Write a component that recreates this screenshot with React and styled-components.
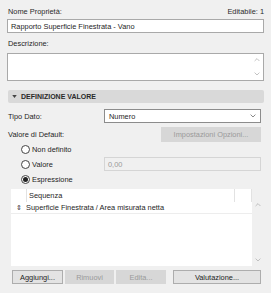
import React from "react";
import styled, { createGlobalStyle } from "styled-components";

const Global = createGlobalStyle`
  html, body { margin: 0; padding: 0; background: #f0f0f0; }
  body { font-family: "Liberation Sans", Arial, sans-serif; }
`;

const Panel = styled.div`
  width: 271px;
  height: 293px;
  box-sizing: border-box;
  padding: 6px 7px 0 7px;
  background: #f0f0f0;
  color: #1e1e1e;
  font-size: 7.4px;
  display: flex;
  flex-direction: column;
  overflow: hidden;
`;

const TopRow = styled.div`
  display: flex;
  justify-content: space-between;
  align-items: center;
  height: 11px;
  padding: 0 0 0 1px;
`;

const Label = styled.span`
  color: #2a2a2a;
`;

const TextBox = styled.div`
  box-sizing: border-box;
  height: 14px;
  margin-top: 2px;
  background: #fff;
  border: 1px solid #a9a9a9;
  display: flex;
  align-items: center;
  padding-left: 3px;
`;

const DescLabel = styled.div`
  margin-top: 5px;
  height: 11px;
  display: flex;
  align-items: center;
  padding-left: 1px;
`;

const TextArea = styled.div`
  box-sizing: border-box;
  margin-top: 4px;
  height: 28px;
  background: #fff;
  border: 1px solid #a9a9a9;
  display: flex;
  justify-content: flex-end;
`;

const ScrollArrows = styled.div`
  width: 12px;
  display: flex;
  flex-direction: column;
  justify-content: space-between;
  align-items: center;
  padding: ${(p) => p.$pad || "4px 0"};
  box-sizing: border-box;
  background: ${(p) => p.$bg || "transparent"};
`;

const Section = styled.div`
  margin-top: 9px;
  margin-left: 1px;
  height: 13px;
  background: #d9d9d9;
  border-radius: 2px;
  display: flex;
  align-items: center;
  padding-left: 4px;
  gap: 4px;
  font-weight: bold;
  font-size: 7px;
  color: #2a2a2a;
`;

const FieldRow = styled.div`
  display: flex;
  align-items: center;
  justify-content: space-between;
  margin-top: ${(p) => p.$mt || 0}px;
  height: ${(p) => p.$h || 15}px;
  padding-left: 1px;
  padding-right: 3px;
`;

const Select = styled.div`
  box-sizing: border-box;
  width: 157px;
  height: 14px;
  background: #fff;
  border: 1px solid #8c8c8c;
  display: flex;
  align-items: center;
  justify-content: space-between;
  padding: 0 4px 0 4px;
`;

const Button = styled.div`
  box-sizing: border-box;
  width: ${(p) => p.$w}px;
  height: ${(p) => p.$h || 15}px;
  margin-left: ${(p) => p.$ml || 0}px;
  display: flex;
  align-items: center;
  justify-content: center;
  background: ${(p) => (p.$disabled ? "#d7d7d7" : "#e3e3e3")};
  border: 1px solid ${(p) => (p.$disabled ? "#d7d7d7" : "#adadad")};
  color: ${(p) => (p.$disabled ? "#9a9a9a" : "#222")};
`;

const RadioRow = styled.div`
  display: flex;
  align-items: center;
  justify-content: space-between;
  height: ${(p) => p.$h || 14}px;
  padding-left: 14px;
  padding-right: 3px;
`;

const RadioLabel = styled.div`
  display: flex;
  align-items: center;
  gap: 2px;
`;

const Circle = styled.span`
  box-sizing: border-box;
  width: 9px;
  height: 9px;
  border-radius: 50%;
  border: 1px solid #444;
  background: #fff;
  display: flex;
  align-items: center;
  justify-content: center;
  &::after {
    content: "";
    width: 5px;
    height: 5px;
    border-radius: 50%;
    background: ${(p) => (p.$checked ? "#222" : "transparent")};
  }
`;

const DisabledInput = styled.div`
  box-sizing: border-box;
  width: 157px;
  height: 14px;
  border: 1px solid #d5d5d5;
  background: #f0f0f0;
  color: #9a9a9a;
  display: flex;
  align-items: center;
  padding-left: 3px;
`;

const ListBox = styled.div`
  margin-top: 3px;
  margin-left: 4px;
  height: 77px;
  display: flex;
`;

const ListBody = styled.div`
  flex: 1;
  background: #fff;
  display: flex;
  flex-direction: column;
`;

const HeaderRow = styled.div`
  display: flex;
  height: 13px;
  align-items: stretch;
`;

const HeadCell = styled.div`
  width: ${(p) => (p.$w ? `${p.$w}px` : "auto")};
  flex: ${(p) => (p.$w ? "none" : 1)};
  border-right: ${(p) => (p.$line ? "1px solid #e2e2e2" : "none")};
  display: flex;
  align-items: center;
  padding-left: ${(p) => p.$pl || 0}px;
`;

const DataRow = styled.div`
  display: flex;
  align-items: center;
  height: 11px;
  border-bottom: 1px solid #ededed;
`;

const Handle = styled.span`
  width: 15px;
  display: flex;
  justify-content: center;
  font-size: 7px;
  color: #333;
`;

const ButtonBar = styled.div`
  display: flex;
  margin-top: 4px;
  margin-left: 5px;
  gap: 2px;
`;

const Chevron = ({ up, color = "#b0b0b0", size = 6 }) => (
  <svg width={size} height={size * 0.6} viewBox="0 0 10 6">
    <path
      d={up ? "M1 5 L5 1 L9 5" : "M1 1 L5 5 L9 1"}
      fill="none"
      stroke={color}
      strokeWidth="1.3"
    />
  </svg>
);

export default function App() {
  return (
    <>
      <Global />
      <Panel>
        <TopRow>
          <Label>Nome Proprietà:</Label>
          <Label>Editabile: 1</Label>
        </TopRow>
        <TextBox>Rapporto Superficie Finestrata - Vano</TextBox>
        <DescLabel>Descrizione:</DescLabel>
        <TextArea>
          <ScrollArrows>
            <Chevron up />
            <Chevron />
          </ScrollArrows>
        </TextArea>
        <Section>
          <svg width="5" height="3" viewBox="0 0 6 4">
            <path d="M0 0 L6 0 L3 4 Z" fill="#444" />
          </svg>
          DEFINIZIONE VALORE
        </Section>
        <FieldRow $mt={6} $h={14}>
          <span>Tipo Dato:</span>
          <Select>
            <span>Numero</span>
            <Chevron color="#666" />
          </Select>
        </FieldRow>
        <FieldRow $mt={4}>
          <span>Valore di Default:</span>
          <Button $w={100} $disabled>
            Impostazioni Opzioni...
          </Button>
        </FieldRow>
        <RadioRow>
          <RadioLabel>
            <Circle />
            Non definito
          </RadioLabel>
        </RadioRow>
        <RadioRow $h={16}>
          <RadioLabel>
            <Circle />
            Valore
          </RadioLabel>
          <DisabledInput>0,00</DisabledInput>
        </RadioRow>
        <RadioRow>
          <RadioLabel>
            <Circle $checked />
            Espressione
          </RadioLabel>
        </RadioRow>
        <ListBox>
          <ListBody>
            <HeaderRow>
              <HeadCell $w={15} $line />
              <HeadCell $pl={2} $line>
                Sequenza
              </HeadCell>
              <HeadCell $w={16} $line />
            </HeaderRow>
            <DataRow>
              <Handle>⇕</Handle>
              <span>Superficie Finestrata / Area misurata netta</span>
            </DataRow>
          </ListBody>
          <ScrollArrows $pad="14px 0 4px" $bg="#f0f0f0">
            <Chevron up />
            <Chevron />
          </ScrollArrows>
        </ListBox>
        <ButtonBar>
          <Button $w={51} $h={14}>
            Aggiungi...
          </Button>
          <Button $w={49} $h={14} $disabled>
            Rimuovi
          </Button>
          <Button $w={50} $h={14} $disabled>
            Edita...
          </Button>
          <Button $w={88} $h={14} $ml={5}>
            Valutazione...
          </Button>
        </ButtonBar>
      </Panel>
    </>
  );
}
